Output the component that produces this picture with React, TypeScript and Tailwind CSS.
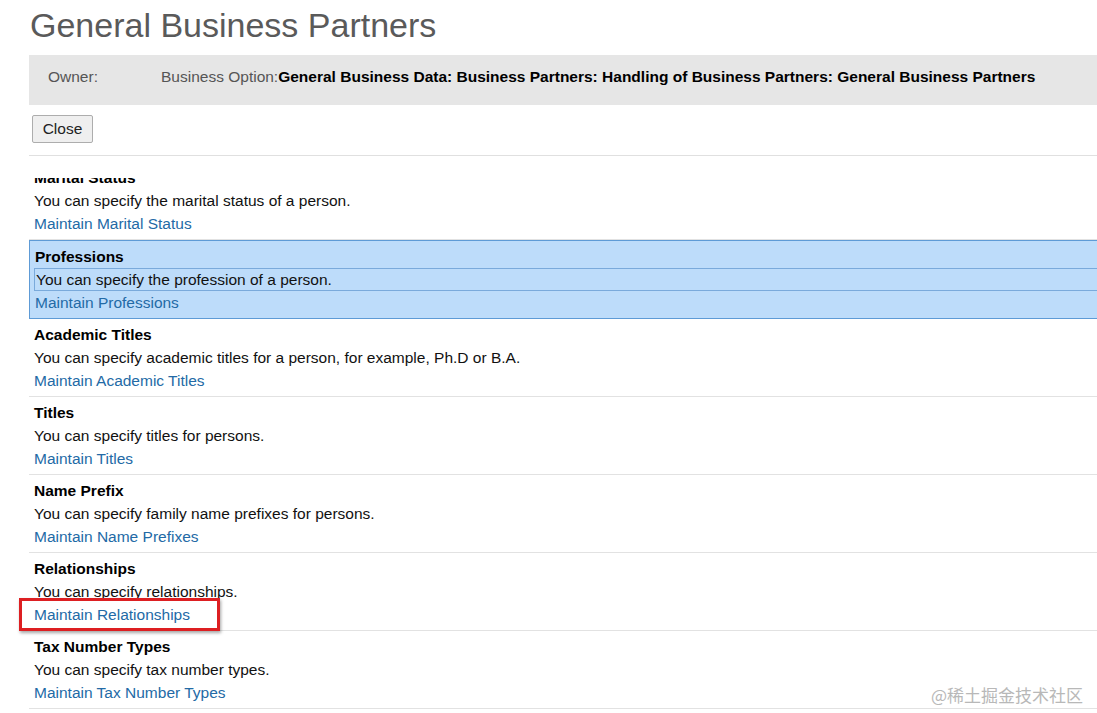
import React from "react";

type Row = { title: string; desc: string; link: string; selected?: boolean; marked?: boolean };

const rows: Row[] = [
  { title: "Marital Status", desc: "You can specify the marital status of a person.", link: "Maintain Marital Status" },
  { title: "Professions", desc: "You can specify the profession of a person.", link: "Maintain Professions", selected: true },
  { title: "Academic Titles", desc: "You can specify academic titles for a person, for example, Ph.D or B.A.", link: "Maintain Academic Titles" },
  { title: "Titles", desc: "You can specify titles for persons.", link: "Maintain Titles" },
  { title: "Name Prefix", desc: "You can specify family name prefixes for persons.", link: "Maintain Name Prefixes" },
  { title: "Relationships", desc: "You can specify relationships.", link: "Maintain Relationships", marked: true },
  { title: "Tax Number Types", desc: "You can specify tax number types.", link: "Maintain Tax Number Types" },
];

function ListRow({ r }: { r: Row }) {
  if (r.selected) {
    return (
      <div className="border border-r-0 border-[#5e9bd6] bg-[#bddcfa] pt-[4px] pb-[4px] pl-[4px]">
        <div className="h-[23px] leading-[24px] pl-[1px] font-bold text-black">{r.title}</div>
        <div className="h-[23px] leading-[22px] pl-[1px] border border-r-0 border-[#7aaadb] text-[#111]">{r.desc}</div>
        <div className="h-[23px] leading-[24px] pl-[1px] text-[#236aa6]">{r.link}</div>
      </div>
    );
  }
  return (
    <div className="border-b border-[#e2e2e2] pt-[4px] pb-[4px] pl-[5px]">
      <div className="h-[23px] leading-[24px] font-bold text-black">{r.title}</div>
      <div className="h-[23px] leading-[24px] text-[#111]">{r.desc}</div>
      <div className="relative h-[23px] leading-[24px] text-[#236aa6]">
        {r.link}
        {r.marked && (
          <div className="absolute left-[-15px] top-[-5px] w-[201px] h-[33px] border-[3px] border-[#dd1f22] shadow-[1px_2px_3px_rgba(0,0,0,0.35)]" />
        )}
      </div>
    </div>
  );
}

export default function App() {
  return (
    <div className="relative w-[1097px] h-[713px] overflow-hidden bg-white font-['Liberation_Sans',Arial,sans-serif] text-[15.5px]">
      <div className="pl-[29px]">
        <h1 className="pt-[6px] pl-[1px] h-[55px] text-[34px] leading-[38px] text-[#5a5a5a] font-normal">
          General Business Partners
        </h1>
        <div className="h-[50px] bg-[#e6e6e6] pl-[19px] pt-[10px] flex leading-[23px]">
          <div className="w-[113px] text-[#555]">Owner:</div>
          <div className="text-[#555] whitespace-nowrap">
            Business Option:
            <span className="font-bold text-black">
              General Business Data: Business Partners: Handling of Business Partners: General Business Partners
            </span>
          </div>
        </div>
        <div className="pt-[10px] pl-[3px]">
          <button className="h-[28px] w-[61px] border border-[#adadad] rounded-[2px] bg-[#efefef] text-[#222] text-[15.5px] leading-[24px] font-['Liberation_Sans',Arial,sans-serif]">
            Close
          </button>
        </div>
        <div className="mt-[12px] border-t border-[#e0e0e0]" />
      </div>
      <div className="mt-[22px] h-[540px] overflow-hidden pl-[29px]">
        <div className="mt-[-16px]">
          {rows.map((r) => (
            <ListRow key={r.title} r={r} />
          ))}
        </div>
      </div>
      <div className="absolute left-[931px] top-[684px] text-[17px] leading-[22px] text-[#b8b8b8] font-['Noto_Sans_CJK_SC',sans-serif] whitespace-nowrap">
        @稀土掘金技术社区
      </div>
    </div>
  );
}
